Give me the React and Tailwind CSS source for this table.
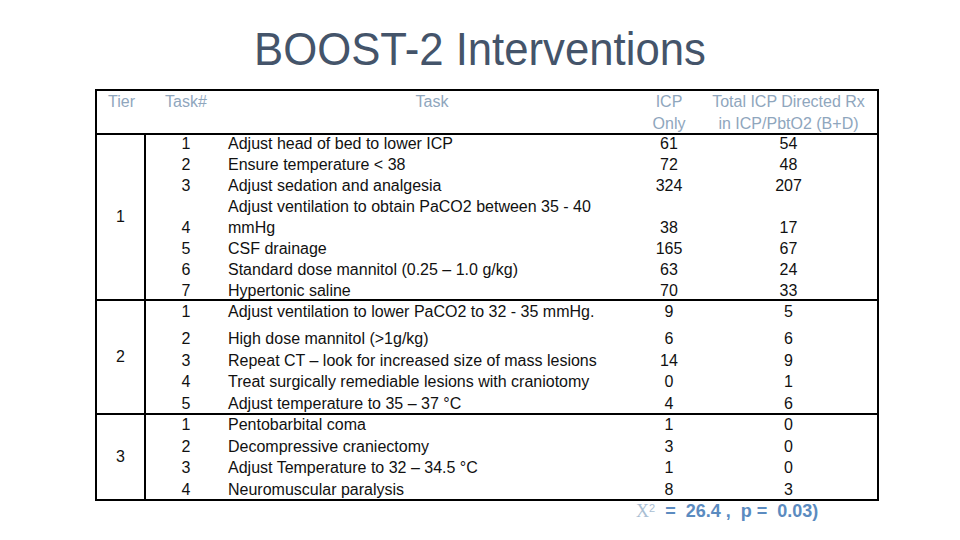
import React from "react";

const tier1 = [
  ["1", "Adjust head of bed to lower ICP", "61", "54"],
  ["2", "Ensure temperature < 38", "72", "48"],
  ["3", "Adjust sedation and analgesia", "324", "207"],
];
const tier1b = [
  ["5", "CSF drainage", "165", "67"],
  ["6", "Standard dose mannitol (0.25 – 1.0 g/kg)", "63", "24"],
  ["7", "Hypertonic saline", "70", "33"],
];
const tier2 = [
  ["2", "High dose mannitol (>1g/kg)", "6", "6"],
  ["3", "Repeat CT – look for increased size of mass lesions", "14", "9"],
  ["4", "Treat surgically remediable lesions with craniotomy", "0", "1"],
  ["5", "Adjust temperature to 35 – 37 °C", "4", "6"],
];
const tier3 = [
  ["1", "Pentobarbital coma", "1", "0"],
  ["2", "Decompressive craniectomy", "3", "0"],
  ["3", "Adjust Temperature to 32 – 34.5 °C", "1", "0"],
  ["4", "Neuromuscular paralysis", "8", "3"],
];

function Row({ r, h }) {
  return (
    <div className={`flex whitespace-nowrap ${h}`}>
      <div className="w-[80px] text-center">{r[0]}</div>
      <div className="w-[412px] pl-[2px]">{r[1]}</div>
      <div className="w-[62px] text-center">{r[2]}</div>
      <div className="w-[177px] text-center">{r[3]}</div>
    </div>
  );
}

export default function App() {
  return (
    <div
      className="w-[960px] h-[540px] bg-white overflow-hidden text-[#111]"
      style={{ fontFamily: '"Liberation Sans", Arial, sans-serif' }}
    >
      <div className="mt-[25px] h-[47px] leading-[47px] text-[47px] text-center text-[#44546A] scale-x-[0.93]">
        BOOST-2 Interventions
      </div>
      <div className="mt-[17px] ml-[95px] w-[784px] border-2 border-black text-[16px]">
        {/* header */}
        <div className="flex h-[44px] border-b-2 border-black text-[#8FA6BD] leading-[22px] whitespace-nowrap">
          <div className="w-[49px] text-center">Tier</div>
          <div className="w-[80px] text-center">Task#</div>
          <div className="w-[412px] text-center">Task</div>
          <div className="w-[62px] text-center">
            <div>ICP</div>
            <div>Only</div>
          </div>
          <div className="w-[177px] text-center">
            <div>Total ICP Directed Rx</div>
            <div>in ICP/PbtO2 (B+D)</div>
          </div>
        </div>
        {/* tier 1 */}
        <div className="flex h-[166px] border-b-2 border-black">
          <div className="w-[49px] border-r-2 border-black flex items-center justify-center">1</div>
          <div className="-mt-[2px] leading-[21px]">
            {tier1.map((r, i) => (
              <Row key={i} r={r} h="h-[21px]" />
            ))}
            <div className="flex whitespace-nowrap h-[42px]">
              <div className="w-[80px] text-center pt-[21px]">4</div>
              <div className="w-[412px] pl-[2px]">
                <div>Adjust ventilation to obtain PaCO2 between 35 - 40</div>
                <div>mmHg</div>
              </div>
              <div className="w-[62px] text-center pt-[21px]">38</div>
              <div className="w-[177px] text-center pt-[21px]">17</div>
            </div>
            {tier1b.map((r, i) => (
              <Row key={i} r={r} h="h-[21px]" />
            ))}
          </div>
        </div>
        {/* tier 2 */}
        <div className="flex h-[114px] border-b-2 border-black">
          <div className="w-[49px] border-r-2 border-black flex items-center justify-center">2</div>
          <div className="leading-[21.5px]">
            <div className="leading-[21px]">
              <Row r={["1", "Adjust ventilation to lower PaCO2 to 32 - 35 mmHg.", "9", "5"]} h="h-[21px]" />
            </div>
            <div className="h-[6px]" />
            {tier2.map((r, i) => (
              <Row key={i} r={r} h="h-[21.5px]" />
            ))}
          </div>
        </div>
        {/* tier 3 */}
        <div className="flex h-[84px]">
          <div className="w-[49px] border-r-2 border-black flex items-center justify-center">3</div>
          <div className="-mt-[1px] leading-[21.5px]">
            {tier3.map((r, i) => (
              <Row key={i} r={r} h="h-[21.5px]" />
            ))}
          </div>
        </div>
      </div>
      <div className="pl-[636px] h-[20px] leading-[20px] text-[18px] whitespace-pre text-[#5B8BC0]">
        <span className="font-normal text-[#A9BED3]" style={{ fontFamily: '"Liberation Serif", serif' }}>X</span>
        <sup className="text-[11px] text-[#A9BED3]">2</sup>
        <span className="font-bold">  =  26.4 ,  p =  0.03)</span>
      </div>
    </div>
  );
}
